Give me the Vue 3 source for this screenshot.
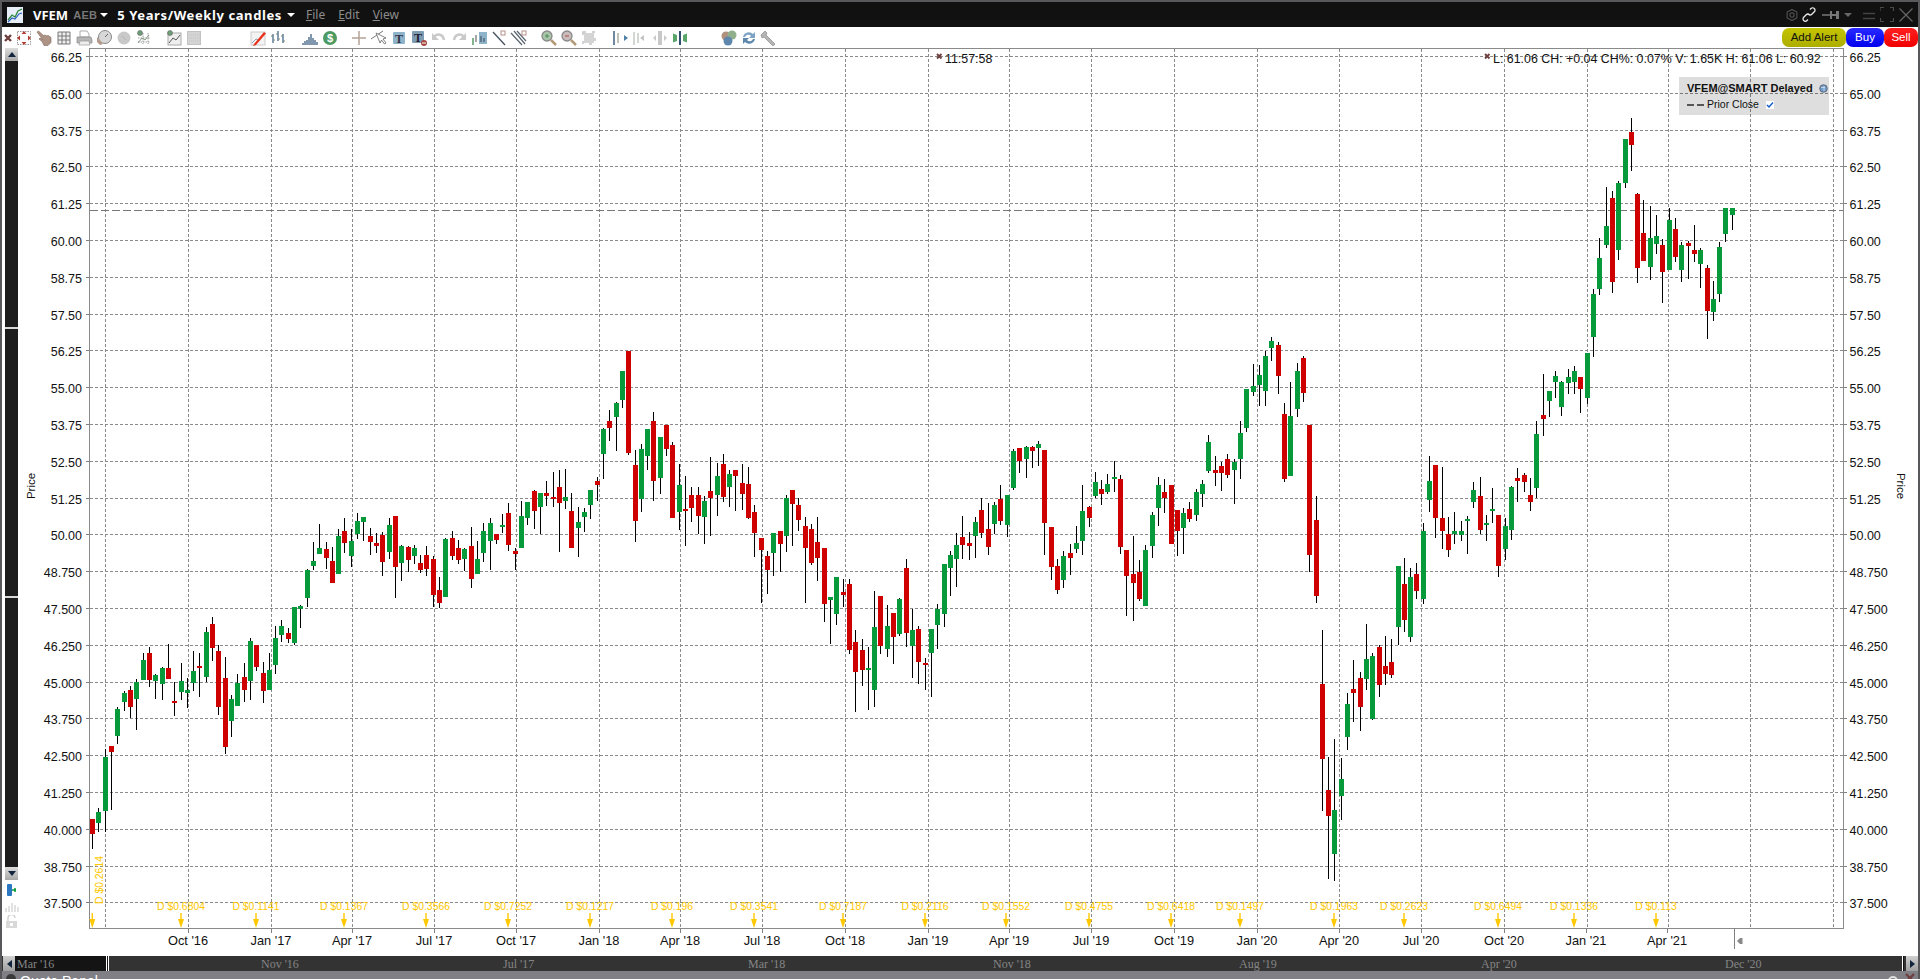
<script setup>
const UP = "g";
const DOWN = "r";

// candles as [x, high, low, bodyTop, bodyBottom, colour], grouped by how they were measured
const candleGroups = [
  { x0: 0, sx: 1, y0: 0, sy: 1, rows: [
    [92, 819, 849, 819, 834, DOWN], [98.5, 808, 832, 812, 823, UP], [105.3, 749, 832, 757, 811, UP], [111.3, 746, 810, 746, 752, DOWN],
  ] },
  { x0: 80, sx: 3, y0: 540, sy: 3, rows: [
    [113,502,612,507,588,UP],[133,453,513,459,486,UP],[151,438,534,450,501,DOWN],[170,417,570,426,477,UP],[190,339,420,360,420,UP],
    [208,321,441,339,420,DOWN],[226,402,477,405,423,UP],[247,381,480,384,432,UP],[265,312,417,384,417,DOWN],[283,426,528,483,489,DOWN],
    [304,369,480,423,456,UP],[322,414,504,450,459,UP],[340,333,453,393,429,UP],[358,339,471,378,384,DOWN],[379,261,426,276,411,UP],
    [397,231,363,252,324,DOWN],[415,315,525,333,501,DOWN],[436,351,642,414,621,DOWN],[454,465,591,477,543,UP],[472,402,498,429,498,UP],
    [493,369,486,411,450,DOWN],[511,294,480,303,423,UP],[529,315,393,315,381,DOWN],[550,366,489,399,453,DOWN],[568,339,450,390,450,UP],
    [586,258,402,294,375,UP],[604,240,306,258,285,UP],[625,264,309,279,297,DOWN],[643,201,315,201,309,UP],
  ] },
  { x0: 300, sx: 2.24, y0: 430, sy: 3, rows: [
    [1,525,594,527,538,UP],[16,417,531,420,504,UP],[30,336,420,393,408,UP],[44,282,372,354,372,UP],[59,336,417,357,384,DOWN],
    [72,351,459,393,459,DOWN],[87,297,432,318,432,UP],[100,264,369,303,339,DOWN],[115,297,411,333,378,UP],[129,249,327,273,312,UP],
    [143,261,333,261,276,UP],[158,294,375,318,336,DOWN],[172,309,369,339,348,DOWN],[185,306,438,315,396,DOWN],[200,264,387,285,366,UP],
    [214,258,504,258,411,DOWN],[228,345,453,348,399,UP],[243,348,426,351,390,DOWN],[257,345,402,354,378,UP],[270,375,429,399,420,DOWN],
    [284,348,438,375,417,DOWN],[299,378,531,387,495,DOWN],[312,441,534,480,519,DOWN],[326,324,501,327,501,UP],[341,303,390,324,378,DOWN],
    [355,330,402,354,390,DOWN],[368,354,423,357,387,UP],[384,291,474,348,447,DOWN],[397,333,432,387,432,UP],[411,279,396,303,369,UP],
    [426,264,420,279,333,UP],[440,312,342,312,330,DOWN],[453,252,309,285,291,UP],[467,219,363,249,345,DOWN],[483,354,420,363,372,DOWN],
    [496,213,354,258,354,UP],[510,216,285,216,264,UP],[525,180,297,183,243,DOWN],[538,189,313,189,231,UP],[552,153,228,189,198,DOWN],
    [568,126,231,201,207,DOWN],[581,120,366,171,219,DOWN],[594,117,237,201,213,UP],[608,189,354,243,354,DOWN],[623,231,381,276,294,UP],
    [637,234,306,246,261,UP],[650,180,267,180,225,UP],[666,141,213,153,165,DOWN],
  ] },
  { x0: 560, sx: 3, y0: 340, sy: 3, rows: [
    [130,264,417,267,342,UP],[148,210,303,243,264,DOWN],[169,186,333,189,231,UP],[187,93,204,93,180,UP],[205,33,345,33,339,DOWN],
    [226,330,606,375,543,DOWN],[244,312,516,327,477,UP],[262,267,390,267,348,UP],[280,216,483,243,423,DOWN],[301,291,462,291,414,UP],
    [319,255,348,255,327,DOWN],[337,306,534,315,534,DOWN],[358,372,570,435,516,UP],[376,408,618,507,513,DOWN],[394,441,546,465,504,DOWN],
    [415,441,582,465,528,DOWN],[433,468,612,483,531,UP],[451,351,588,453,474,DOWN],[472,369,528,408,465,UP],[490,342,486,372,471,DOWN],
    [508,390,501,402,441,UP],[526,390,513,390,408,DOWN],[547,372,510,429,462,DOWN],[565,381,537,432,534,DOWN],[583,495,651,516,579,DOWN],
    [604,594,789,594,630,DOWN],[622,633,762,648,690,DOWN],[640,579,708,579,639,UP],[661,573,696,573,612,DOWN],[679,465,636,474,588,UP],
    [697,450,618,450,492,DOWN],[715,474,573,495,540,DOWN],[736,531,789,558,624,DOWN],[754,552,675,567,669,DOWN],[772,531,723,606,654,DOWN],
    [793,624,846,624,792,DOWN],[811,771,912,771,780,UP],[829,711,855,711,822,UP],[850,717,801,756,765,DOWN],[868,717,942,732,930,DOWN],
  ] },
  { x0: 300, sx: 2.24, y0: 430, sy: 3, rows: [
    [1244,600,846,636,726,DOWN],[1259,627,768,660,720,DOWN],[1273,651,840,714,720,UP],[1286,483,831,591,780,UP],[1300,498,672,498,648,DOWN],
    [1315,525,681,588,657,UP],[1330,549,702,549,621,DOWN],[1342,504,618,507,612,UP],[1358,387,651,414,609,DOWN],[1372,537,744,600,649,UP],
    [1386,588,762,597,696,DOWN],[1401,684,780,699,705,DOWN],[1415,597,801,597,669,UP],[1428,522,657,537,585,UP],[1443,402,591,402,552,UP],
    [1457,363,498,375,414,UP],[1471,309,471,345,387,UP],[1484,258,387,321,345,DOWN],[1499,306,390,339,348,DOWN],[1513,261,384,276,318,UP],
    [1527,204,324,240,309,DOWN],
  ] },
  { x0: 560, sx: 3, y0: 340, sy: 3, rows: [
    [1285,489,645,567,621,DOWN],[1303,486,582,495,552,UP],[1321,435,555,477,543,DOWN],[1342,465,591,465,555,UP],[1360,327,450,333,444,UP],
    [1378,324,399,324,363,DOWN],[1399,318,414,321,357,UP],[1417,318,384,321,333,DOWN],[1435,303,378,312,324,UP],
  ] },
  { x0: 1040, sx: 3, y0: 340, sy: 3, rows: [
    [13,330,645,330,549,DOWN],[34,561,720,561,681,DOWN],[52,657,762,678,750,DOWN],[70,633,744,648,720,UP],[91,612,705,639,654,DOWN],
    [109,558,639,609,627,UP],[127,435,645,513,603,UP],[148,498,561,501,534,DOWN],[166,396,474,426,468,UP],[184,420,495,447,462,DOWN],
    [202,402,462,432,456,UP],[223,363,456,411,417,UP],[241,405,642,417,621,DOWN],[259,630,828,630,708,DOWN],[280,588,843,702,729,DOWN],
    [298,660,783,696,777,DOWN],[316,615,798,630,798,UP],[337,516,654,525,618,UP],[355,411,558,435,504,UP],[373,417,519,456,474,DOWN],
    [394,435,612,435,612,DOWN],[412,510,648,510,573,DOWN],[430,504,642,519,564,UP],[448,486,546,507,537,DOWN],[469,447,543,456,525,UP],
    [487,420,501,432,462,UP],[505,285,399,306,393,UP],[526,348,438,390,399,DOWN],[544,366,453,378,399,DOWN],[562,342,414,357,405,DOWN],
    [583,357,492,366,390,UP],[601,243,417,279,357,UP],[619,147,276,147,264,UP],[640,72,168,138,156,UP],[658,75,198,105,135,UP],
    [676,33,198,48,153,UP],[694,-9,63,3,24,UP],[715,6,162,15,108,DOWN],[733,189,426,222,417,DOWN],[751,126,408,228,408,UP],
    [772,69,231,93,207,UP],[790,48,186,54,159,DOWN],[808,255,696,255,645,DOWN],[829,468,789,540,768,DOWN],
  ] },
  { x0: 1000, sx: 2.529, y0: 380, sy: 2.851, rows: [
    [815,713,1229,867,1080,DOWN],[830,1075,1422,1169,1243,DOWN],[846,1023,1428,1226,1351,UP],[863,1078,1254,1138,1186,UP],[879,892,1055,924,1018,UP],
    [894,798,975,882,892,DOWN],[911,832,1001,850,932,DOWN],[927,696,884,795,852,UP],[942,778,970,787,967,UP],[959,756,905,761,870,DOWN],
    [975,730,870,815,838,DOWN],[990,738,850,804,841,DOWN],[1007,530,755,530,704,UP],[1023,507,718,582,684,DOWN],[1038,537,747,562,733,UP],
    [1053,522,624,553,602,DOWN],[1071,408,639,430,624,UP],[1086,217,376,288,342,UP],[1101,242,450,242,393,DOWN],[1119,248,482,393,430,DOWN],
    [1134,391,505,439,485,DOWN],[1149,376,468,430,439,UP],[1167,402,459,430,442,UP],[1182,388,496,396,402,UP],[1197,291,365,314,348,UP],
    [1215,277,439,331,428,DOWN],[1230,385,459,408,413,UP],[1245,308,408,368,373,UP],[1260,385,561,385,530,DOWN],[1278,393,513,416,482,UP],
    [1293,302,456,305,428,UP],[1309,251,348,279,288,DOWN],[1326,265,319,271,291,DOWN],[1341,279,373,328,348,DOWN],[1357,117,336,154,308,UP],
  ] },
  { x0: 0, sx: 1, y0: 0, sy: 1, rows: [
    [1543.3,374,436,415,419,DOWN],[1549.3,391,417,391,401,UP],[1555.3,371,398,376,382,UP],[1561,381,416,382,407,UP],
    [1568.3,369,394,377,383,UP],[1574.3,366,394,371,382,UP],[1580.5,377,413,377,389,DOWN],[1587,353,404,353,398,UP],
  ] },
  { x0: 1500, sx: 3, y0: 100, sy: 3, rows: [
    [280,567,771,582,711,UP],[298,414,585,474,567,UP],[319,261,444,378,435,UP],[337,273,579,294,546,DOWN],[355,243,480,249,450,UP],
    [376,117,264,117,249,UP],[394,54,213,96,135,DOWN],[412,279,549,282,504,DOWN],[430,300,483,399,483,DOWN],[451,318,540,414,501,UP],
    [469,345,462,408,432,UP],[487,417,609,435,516,DOWN],[508,324,510,360,510,UP],[526,354,486,387,471,DOWN],[544,426,546,435,510,UP],
    [565,423,537,429,438,DOWN],[583,375,486,450,462,DOWN],[601,444,564,450,492,UP],[622,495,717,504,633,DOWN],[640,543,663,597,636,UP],
    [658,426,606,441,582,UP],[676,324,426,324,402,UP],[697,324,390,324,345,UP],
  ] },
];

const candles = candleGroups.flatMap((g) =>
  g.rows.map(([px, hi, lo, top, bot, c]) => {
    const bodyTop = Math.round(g.y0 + top / g.sy);
    const bodyBot = Math.round(g.y0 + bot / g.sy);
    return {
      x: Math.floor(g.x0 + px / g.sx),
      hi: Math.round(g.y0 + hi / g.sy),
      lo: Math.round(g.y0 + lo / g.sy),
      top: bodyTop,
      h: Math.max(bodyBot - bodyTop, 2),
      c,
    };
  })
);

const priceLabels = ["66.25", "65.00", "63.75", "62.50", "61.25", "60.00", "58.75", "57.50", "56.25", "55.00", "53.75", "52.50", "51.25", "50.00", "48.750", "47.500", "46.250", "45.000", "43.750", "42.500", "41.250", "40.000", "38.750", "37.500"];
const priceRows = priceLabels.map((label, i) => ({ label, y: Math.floor(56.5 + 36.8 * i) + 0.5 }));

const gridX = [105, 188, 271, 352, 434, 516, 599, 680, 762, 845, 928, 1009, 1091, 1174, 1257, 1339, 1421, 1504, 1587, 1668, 1750, 1833];
const timeLabels = [
  ["Oct '16", 188], ["Jan '17", 271], ["Apr '17", 352], ["Jul '17", 434], ["Oct '17", 516], ["Jan '18", 599], ["Apr '18", 680],
  ["Jul '18", 762], ["Oct '18", 845], ["Jan '19", 928], ["Apr '19", 1009], ["Jul '19", 1091], ["Oct '19", 1174], ["Jan '20", 1257],
  ["Apr '20", 1339], ["Jul '20", 1421], ["Oct '20", 1504], ["Jan '21", 1586], ["Apr '21", 1667],
];

const dividends = [
  ["D $0.6804", 181], ["D $0.1141", 256], ["D $0.1367", 344], ["D $0.3566", 426], ["D $0.7252", 508], ["D $0.1217", 590], ["D $0.196", 672],
  ["D $0.3541", 754], ["D $0.7187", 843], ["D $0.2116", 925], ["D $0.1552", 1006], ["D $0.4755", 1089], ["D $0.6418", 1171], ["D $0.1497", 1240],
  ["D $0.1963", 1334], ["D $0.2623", 1404], ["D $0.6494", 1498], ["D $0.1336", 1574], ["D $0.113", 1656],
];

const navLabels = [
  ["Nov '16", 261], ["Jul '17", 503], ["Mar '18", 748], ["Nov '18", 993], ["Aug '19", 1239], ["Apr '20", 1481], ["Dec '20", 1725],
];

const bars = (xs, color) => xs.map(([x, y]) => `<path d="M${x} ${y}V17" stroke="${color}" stroke-width="1.4"/>`).join("");

// toolbar icons, gap is the space before the icon
const tools = [
  { gap: -4, svg: '<path d="M7 7l6 6M13 7l-6 6" stroke="#6e3f3f" stroke-width="2.4"/>' },
  { gap: -4, svg: '<rect x="3.5" y="3.5" width="13" height="13" fill="#fff" stroke="#999" stroke-dasharray="1.5 1"/><path d="M10 3l-2.4 3h4.8zM10 17l-2.4-3h4.8zM3 10l3-2.4v4.8zM17 10l-3-2.4v4.8z" fill="#b23a2e"/>' },
  { gap: 0, svg: '<path d="M3 4l1.5-1 5 4.500 1.500-.5 1.500.7 2-.2 2.500 2v5l-3 3h-4l-2-4-3-2.500 1-1 2.500 1.500z" fill="#ad9385" stroke="#85695c" stroke-width=".6"/>' },
  { gap: 0, svg: '<path d="M4 4h12v12H4zM4 8h12M4 12h12M8 4v12M12 4v12" fill="#eee" stroke="#777"/>' },
  { gap: 0, svg: '<path d="M6 3h7l2 3v3H6z" fill="#fff" stroke="#aaa"/><path d="M3 9h14l1 3v3H3z" fill="#b5b5b5" stroke="#888" stroke-width=".7"/><path d="M6 13h9l1 4H5z" fill="#eee" stroke="#999" stroke-width=".7"/>' },
  { gap: 0, svg: '<circle cx="11" cy="9" r="6.500" fill="#d8d8d8" stroke="#888"/><path d="M11 9l3-3" stroke="#666"/><path d="M3 9l6 7-3 1-3-3z" fill="#b59a8c"/>' },
  { gap: 0, svg: '<circle cx="10" cy="10" r="6.500" fill="#c9c9c9"/><path d="M8 8l4 4" stroke="#b5b5b5"/>' },
  { gap: 0, svg: '<path d="M4 14h12M4 10h12M9 5v11M14 5v11" stroke="#9a9a9a" stroke-dasharray="1.5 1"/><path d="M4 15l4-5 3 2 4-5" fill="none" stroke="#8a9a8a"/><circle cx="6" cy="5" r="2.500" fill="#6d9e76" stroke="#555" stroke-width=".5"/>' },
  { gap: 10, svg: '<rect x="4" y="5" width="13" height="12" fill="#eee" stroke="#aaa"/><path d="M5 15l4-5 3 2 4-5" fill="none" stroke="#555"/><circle cx="6" cy="5" r="2.500" fill="#6d9e76" stroke="#555" stroke-width=".5"/>' },
  { gap: 0, svg: '<rect x="3.500" y="3.500" width="13" height="13" fill="#d4d4d4" stroke="#c2c2c2"/><path d="M3 7h14M3 10h14M3 13h14" stroke="#c4c4c4" stroke-dasharray="1 1"/>' },
  { gap: 44, svg: '<rect x="3" y="4" width="14" height="13" fill="#f3f3f3" stroke="#ccc"/><path d="M4 15l4-4 3 1 4-4" fill="none" stroke="#8ba2b6"/><path d="M6 16L16 4l2 1.500L8 17l-3 1z" fill="#e8321e"/>' },
  { gap: 0, svg: '<path d="M5 6v9M10 3v10M15 6v9" stroke="#5f7f9c" stroke-width="1.500"/><path d="M3 8h2M5 12h2M8 6h2M10 11h2M13 8h2M15 13h2" stroke="#7d8a70"/>' },
  { gap: 12, svg: bars([[3,15],[5,13],[7,12],[9,9],[11,6],[13,10],[15,12],[17,14]], "#4a6b8c") },
  { gap: 0, svg: '<circle cx="10" cy="10" r="7" fill="#4d9a62"/><text x="10" y="14" text-anchor="middle" font-family="Liberation Sans" font-weight="700" font-size="11" fill="#fff">$</text>' },
  { gap: 9, svg: '<path d="M10 3v14M3 10h14" stroke="#b5a396" stroke-width="1.500"/>' },
  { gap: 0, svg: '<path d="M2 11L14 3" stroke="#777"/><path d="M7 5l4 10 1.500-3 3 4 1.500-1-3-4 3-1z" fill="#fff" stroke="#666" stroke-width=".8"/>' },
  { gap: 0, svg: '<rect x="4" y="4" width="12" height="12" rx="1" fill="#8fb3c9"/><text x="10" y="14.500" text-anchor="middle" font-family="Liberation Serif" font-weight="700" font-size="12" fill="#334">T</text>' },
  { gap: 0, svg: '<rect x="3" y="3" width="12" height="12" rx="1" fill="#7e9db3"/><text x="9" y="13.500" text-anchor="middle" font-family="Liberation Serif" font-weight="700" font-size="12" fill="#223">T</text><circle cx="15" cy="15" r="3" fill="#a5473f"/><path d="M13 15h4" stroke="#fff"/>' },
  { gap: 0, svg: '<path d="M5 9c3-4 9-3 10 3" fill="none" stroke="#c9c9c9" stroke-width="2.500"/><path d="M3 5v7h7z" fill="#c9c9c9"/>' },
  { gap: 0, svg: '<path d="M15 9c-3-4-9-3-10 3" fill="none" stroke="#c9c9c9" stroke-width="2.500"/><path d="M17 5v7h-7z" fill="#c9c9c9"/>' },
  { gap: 0, svg: '<path d="M4 10v7" stroke="#5a9a6a" stroke-width="1.500"/><path d="M7 7v7" stroke="#888" stroke-width="1.500"/><rect x="10" y="4" width="8" height="12" fill="#8fb3c9"/><path d="M12 8v6M15 10v4" stroke="#345"/>' },
  { gap: 0, svg: '<path d="M4 4l12 13" stroke="#44515e" stroke-width="1.300"/><rect x="12" y="3" width="4" height="4" fill="#fff" stroke="#b5908a"/>' },
  { gap: 0, svg: '<path d="M2 5l11 12M5 3l11 13M8 3l9 10" stroke="#5a6570" stroke-width="1.200"/><rect x="13" y="3" width="4" height="4" fill="#fff" stroke="#b5908a"/>' },
  { gap: 10, svg: '<circle cx="8" cy="8" r="5" fill="#a9c4a9" stroke="#8a8a8a" stroke-width="1.300"/><path d="M6 8h4M8 6v4" stroke="#4c8f5a"/><path d="M12 12l5 5" stroke="#b59a7a" stroke-width="2.500"/>' },
  { gap: 0, svg: '<circle cx="8" cy="8" r="5" fill="#c9bcbc" stroke="#8a8a8a" stroke-width="1.300"/><path d="M6 8h4" stroke="#a84c40"/><path d="M12 12l5 5" stroke="#b59a7a" stroke-width="2.500"/>' },
  { gap: 0, svg: '<rect x="5" y="5" width="10" height="10" fill="#d4d4d4"/><path d="M4 4h12v12H4z" fill="none" stroke="#c4c4c4" stroke-width="1.500" stroke-dasharray="3 6"/>' },
  { gap: 11, svg: '<path d="M4 3v14" stroke="#3f5f7f" stroke-width="1.500"/><path d="M8 5v10" stroke="#7d8a70"/><path d="M11 10h3V7l4 3-4 3v-3z" fill="#4f7fa5"/>' },
  { gap: 0, svg: '<path d="M4 4v13M8 5v10" stroke="#b9c4b9" stroke-width="1.300"/><path d="M18 10h-4V7l-4 3 4 3v-3z" fill="#c4c4c4"/>' },
  { gap: 0, svg: '<rect x="8" y="3" width="4" height="14" fill="#c9c9c9"/><path d="M6 7l-3 3 3 3zM14 7l3 3-3 3z" fill="#c9c9c9"/>' },
  { gap: 0, svg: '<rect x="9" y="3" width="2" height="14" fill="#2f4f6f"/><path d="M7 7l-4-1.500v9L7 13zM13 7l4-1.500v9L13 13z" fill="#5aa56a"/>' },
  { gap: 29, svg: '<circle cx="7" cy="8" r="4.500" fill="#b08f7f"/><circle cx="13" cy="7" r="4.500" fill="#8fb08a"/><circle cx="9" cy="13" r="4.500" fill="#5f87ad"/>' },
  { gap: 0, svg: '<path d="M4 9a6 6 0 0 1 10-3l2-2v6h-6l2-2a3.500 3.500 0 0 0-6 1z" fill="#7fa3c4"/><path d="M16 11a6 6 0 0 1-10 3l-2 2v-6h6l-2 2a3.500 3.500 0 0 0 6-1z" fill="#5d87ad"/>' },
  { gap: 0, svg: '<path d="M4 5l2-2 2 2-1 2 9 9-2 2-9-9-2 1-1-3z" fill="#b5b5b5" stroke="#8a8a8a" stroke-width=".7"/>' },
];
</script>

<template>
  <div class="app">
    <header class="titlebar">
      <svg class="logo" viewBox="0 0 16 16">
        <rect width="16" height="16" fill="#e8eef8" />
        <path d="M1 13l4-5 3 2 3-6 4-2" fill="none" stroke="#2d8a3e" stroke-width="1.300" />
        <path d="M1 15l4-4 3 1 4-5 3-1" fill="none" stroke="#2a5fc0" stroke-width="1.100" />
      </svg>
      <span class="symbol">VFEM</span>
      <span class="exchange">AEB</span>
      <span class="caret"></span>
      <span class="period">5 Years/Weekly candles</span>
      <span class="caret"></span>
      <nav class="menu">
        <span><u>F</u>ile</span>
        <span><u>E</u>dit</span>
        <span><u>V</u>iew</span>
      </nav>
      <div class="window-tools">
        <svg class="gear" width="12" height="12" viewBox="0 0 14 14">
          <path d="M7 .5l5.700 3.200v6.600L7 13.500l-5.700-3.200V3.700z" fill="none" stroke="#555" stroke-width="1.200" />
          <circle cx="7" cy="7" r="2.500" fill="none" stroke="#555" stroke-width="1.200" />
        </svg>
        <svg class="link" width="14" height="15" viewBox="0 0 14 15">
          <path d="M8 2.500l1-1a2.300 2.300 0 0 1 3.300 3.300l-2.500 2.500a2.300 2.300 0 0 1-3.300 0M6 12.500l-1 1a2.300 2.300 0 0 1-3.300-3.300l2.500-2.500a2.300 2.300 0 0 1 3.300 0" fill="none" stroke="#e8e8e8" stroke-width="1.300" />
        </svg>
        <svg class="pin" width="17" height="8" viewBox="0 0 17 8">
          <path d="M0 4h8" stroke="#777" stroke-width="1.500" />
          <path d="M8 0h2v3h4V0h3v8h-3V5h-4v3H8z" fill="#777" />
        </svg>
        <span class="caret dim"></span>
        <svg class="win-eq" width="12" height="8" viewBox="0 0 12 8">
          <path d="M0 1.500h12M0 6.500h12" stroke="#444" stroke-width="1.300" />
        </svg>
        <svg class="win-max" width="14" height="15" viewBox="0 0 14 15">
          <path d="M0 4V.5h4M10 .5h3.500V4M13.500 11v3.500H10M4 14.500H.5V11" fill="none" stroke="#4a4a4a" stroke-width="1.200" />
        </svg>
        <svg class="win-close" width="14" height="14" viewBox="0 0 14 14">
          <path d="M.5.5l13 13M13.500.5l-13 13" stroke="#666" stroke-width="1.200" />
        </svg>
      </div>
    </header>

    <div class="toolbar">
      <svg
        v-for="(tool, i) in tools"
        :key="i"
        class="tool"
        viewBox="0 0 20 20"
        :style="{ marginLeft: tool.gap + 'px' }"
        v-html="tool.svg"
      ></svg>
      <div class="actions">
        <button class="action alert" type="button">Add Alert</button>
        <button class="action buy" type="button">Buy</button>
        <button class="action sell" type="button">Sell</button>
      </div>
    </div>

    <div class="chart-area">
      <aside class="rail">
        <div class="scrollbar">
          <span class="scroll-btn"><i class="tri-up"></i></span>
          <span class="scroll-track"><i class="mark first"></i><i class="mark second"></i></span>
          <span class="scroll-btn"><i class="tri-down"></i></span>
        </div>
        <svg class="rail-icon" width="13" height="14" viewBox="0 0 13 14">
          <rect x="2" y="1" width="5" height="12" rx="1" fill="#2b78c2" />
          <path d="M7 7h4M10 5v4" stroke="#0a9b3a" stroke-width="1.500" />
        </svg>
        <svg class="rail-icon bars" width="14" height="9" viewBox="0 0 14 9">
          <path d="M1 9V5M4 9V3M7 9V0M10 9V2M13 9V4" stroke="#c4c4c4" />
        </svg>
        <svg class="rail-icon lock" width="13" height="13" viewBox="0 0 13 13">
          <path d="M3 6V3a3 3 0 0 1 7 0" fill="none" stroke="#ccc" stroke-width="1.300" />
          <rect x="1" y="6" width="11" height="7" fill="#d8d8d8" />
          <rect x="5" y="8" width="3" height="3" fill="#fff" />
        </svg>
      </aside>

      <svg class="chart" width="1896" height="908" viewBox="22 48 1896 908">
        <g class="grid" shape-rendering="crispEdges">
          <line v-for="row in priceRows" :key="row.label" x1="90" x2="1843" :y1="row.y" :y2="row.y" />
          <line v-for="x in gridX" :key="x" :x1="x + 0.5" :x2="x + 0.5" y1="49" y2="928" />
        </g>
        <g class="ticks" shape-rendering="crispEdges">
          <template v-for="row in priceRows" :key="row.label">
            <line x1="86" x2="90" :y1="row.y" :y2="row.y" />
            <line x1="1843" x2="1847" :y1="row.y" :y2="row.y" />
          </template>
          <line v-for="t in timeLabels" :key="t[0]" :x1="t[1] + 0.5" :x2="t[1] + 0.5" y1="928" y2="933" />
        </g>
        <rect class="frame" x="89.500" y="48.500" width="1754" height="880" shape-rendering="crispEdges" />

        <line class="prior-close" x1="90" x2="1843" y1="210.500" y2="210.500" shape-rendering="crispEdges" />

        <g shape-rendering="crispEdges">
          <g v-for="(c, i) in candles" :key="i">
            <rect :x="c.x" :y="c.hi" width="1" :height="c.lo - c.hi" fill="#000" />
            <rect :x="c.x - 2" :y="c.top" width="5" :height="c.h" :fill="c.c === 'g' ? '#069a3a' : '#cf0000'" />
          </g>
        </g>

        <g class="labels">
          <template v-for="row in priceRows" :key="row.label">
            <text x="82" :y="row.y + 5" text-anchor="end">{{ row.label }}</text>
            <text x="1849.500" :y="row.y + 5">{{ row.label }}</text>
          </template>
          <text v-for="t in timeLabels" :key="t[0]" class="time" :x="t[1]" y="945" text-anchor="middle">{{ t[0] }}</text>
          <text class="axis-title" transform="translate(35 486) rotate(-90)" text-anchor="middle">Price</text>
          <text class="axis-title" transform="translate(1897 486) rotate(90)" text-anchor="middle">Price</text>
        </g>

        <g class="dividends">
          <g v-for="d in dividends" :key="d[0]">
            <text :x="d[1]" y="909.500" text-anchor="middle">{{ d[0] }}</text>
            <path :d="`M${d[1] - 0.7} 913h1.400v6h2.300l-3 9-3-9h2.300z`" />
          </g>
          <text transform="translate(102.500 904) rotate(-90)">D $0.2614</text>
          <path d="M91.600 913h1.400v6h2.300l-3 9-3-9h2.300z" />
        </g>

        <g>
          <path class="cross" d="M937 54l4.500 4.500M941.500 54L937 58.500" />
          <text class="status" x="945" y="63">11:57:58</text>
          <path class="cross" d="M1485 54l4.500 4.500M1489.500 54L1485 58.500" />
          <text class="status" x="1493" y="63">L: 61.06 CH: +0.04 CH%: 0.07% V: 1.65K H: 61.06 L: 60.92</text>
        </g>

        <line x1="1734.500" x2="1734.500" y1="928" y2="949" stroke="#808080" shape-rendering="crispEdges" />
        <path d="M1737 941l3-3h2.500v6H1740z" fill="#888" />
      </svg>

      <div class="legend">
        <div class="legend-head">
          <span>VFEM@SMART Delayed</span>
          <svg width="9" height="9" viewBox="0 0 9 9"><circle cx="4.500" cy="4.500" r="3.800" fill="#6d9cc9" stroke="#556" stroke-width=".8" /><path d="M2 3.500h4M5 2v5" stroke="#dde" stroke-width=".8" /></svg>
        </div>
        <div class="legend-row">
          <svg class="dashes" width="17" height="2" viewBox="0 0 17 2"><path d="M0 1h7M10 1h7" stroke="#555" stroke-width="2" /></svg>
          <span>Prior Close</span>
          <svg class="check" width="8" height="8" viewBox="0 0 8 8"><rect width="8" height="8" fill="#fff" /><path d="M1 4l2 2 4-4.500" fill="none" stroke="#1560c8" stroke-width="1.500" /></svg>
        </div>
      </div>
    </div>

    <div class="navigator">
      <span class="nav-btn"><i class="tri-left"></i></span>
      <span class="nav-label first">Mar '16</span>
      <span class="nav-thumb"></span>
      <span
        v-for="n in navLabels"
        :key="n[0]"
        class="nav-label tick"
        :style="{ left: n[1] - 2 + 'px' }"
      >{{ n[0] }}</span>
      <span class="nav-thumb end"></span>
      <span class="nav-btn right"><i class="tri-right"></i></span>
    </div>

    <div class="quote-panel">
      <span class="panel-dot"></span>
      <span class="panel-name">Quote Panel</span>
      <span class="panel-icons">
        <svg width="12" height="8" viewBox="0 0 12 8"><path d="M2 8a4 4 0 0 1 8 0" fill="none" stroke="#ddd" stroke-width="2" /></svg>
        <svg width="10" height="8" viewBox="0 0 10 8"><path d="M1 1l8 8M9 1L1 9" stroke="#6e3f3f" stroke-width="2.400" /></svg>
      </span>
    </div>
  </div>
</template>

<style scoped>
.app {
  width: 1920px;
  height: 979px;
  box-sizing: border-box;
  padding: 2px 2px 0;
  background: #58585a;
  display: flex;
  flex-direction: column;
  overflow: hidden;
  font-family: "Liberation Sans", Arial, sans-serif;
}
.titlebar {
  height: 25px;
  flex: none;
  background: #111;
  display: flex;
  align-items: center;
  color: #fff;
  padding-left: 5px;
}
.logo {
  width: 16px;
  height: 16px;
  margin-right: 10px;
}
.symbol,
.period {
  font-family: "Noto Sans", sans-serif;
  font-weight: 700;
  font-size: 13px;
}
.period {
  letter-spacing: 0.6px;
}
.exchange {
  font-size: 11px;
  font-weight: 700;
  color: #777;
  margin-left: 5px;
  letter-spacing: 0.3px;
}
.caret {
  width: 0;
  height: 0;
  border-left: 4px solid transparent;
  border-right: 4px solid transparent;
  border-top: 4px solid #fff;
  margin-left: 3px;
  margin-right: 9px;
}
.period + .caret {
  margin-left: 5px;
  margin-right: 0;
}
.menu {
  display: flex;
  gap: 13px;
  margin-left: 11px;
  font-family: "Noto Sans", sans-serif;
  font-size: 12px;
  color: #8c8c8c;
}
.window-tools {
  margin-left: auto;
  display: flex;
  align-items: center;
  padding-right: 5px;
}
.caret.dim {
  border-top-color: #666;
  margin: 0 0 0 5px;
}
.link {
  margin-left: 4px;
}
.pin {
  margin-left: 6px;
}
.win-eq {
  margin-left: 11px;
  margin-top: 3px;
}
.win-max {
  margin-left: 5px;
}
.win-close {
  margin-left: 5px;
}
.toolbar {
  height: 21px;
  flex: none;
  background: #fff;
  display: flex;
  align-items: center;
}
.tool {
  width: 20px;
  height: 20px;
  flex: none;
}
.actions {
  margin-left: auto;
  display: flex;
  height: 19px;
  margin-top: -1px;
}
.action {
  border: 0;
  padding: 0;
  font-family: "Liberation Sans", Arial, sans-serif;
  font-size: 11.500px;
  border-radius: 7px;
  line-height: 19px;
}
.alert {
  width: 64px;
  color: #111;
  background: linear-gradient(#c4c400, #adad00);
}
.buy {
  width: 38px;
  color: #fff;
  background: linear-gradient(#2a2aff, #0000ee);
}
.sell {
  width: 34px;
  color: #fff;
  background: linear-gradient(#ff2020, #f00000);
}
.chart-area {
  position: relative;
  height: 908px;
  flex: none;
  background: #fff;
  display: flex;
}
.rail {
  width: 20px;
  flex: none;
  display: flex;
  flex-direction: column;
  align-items: flex-start;
  padding-left: 3px;
  box-sizing: border-box;
}
.scrollbar {
  width: 13px;
  height: 832px;
  display: flex;
  flex-direction: column;
}
.scroll-btn {
  height: 13px;
  flex: none;
  background: linear-gradient(#ddd, #a8a8a8);
  display: flex;
  align-items: center;
  justify-content: center;
}
.scroll-track {
  flex: 1;
  background: #1c1c1c;
  position: relative;
}
.mark {
  position: absolute;
  left: 0;
  right: 0;
  height: 2px;
  background: #d8d8d8;
}
.mark.first {
  top: 266px;
}
.mark.second {
  top: 535px;
}
.tri-up,
.tri-down {
  width: 0;
  height: 0;
  border-left: 4px solid transparent;
  border-right: 4px solid transparent;
}
.tri-up {
  border-bottom: 5px solid #10243c;
}
.tri-down {
  border-top: 5px solid #10243c;
}
.rail-icon {
  margin-top: 3px;
}
.rail-icon.bars {
  margin-top: 6px;
}
.rail-icon.lock {
  margin-top: 3px;
}
.chart {
  display: block;
  flex: none;
}
.grid line {
  stroke: #8a8a8a;
  stroke-dasharray: 3 2;
}
.ticks line {
  stroke: #808080;
}
.frame {
  fill: none;
  stroke: #8a8a8a;
}
.prior-close {
  stroke: #777;
  stroke-dasharray: 8 3;
}
.labels text {
  font-family: "Liberation Sans", Arial, sans-serif;
  font-size: 12.500px;
  fill: #111;
}
.labels .time {
  font-size: 12.800px;
}
.labels .axis-title {
  font-size: 11.500px;
}
.dividends text {
  font-family: "Liberation Sans", Arial, sans-serif;
  font-size: 10.400px;
  fill: #ffc800;
}
.dividends path {
  fill: #ffc800;
}
.cross {
  stroke: #6e3f3f;
  stroke-width: 1.800;
  fill: none;
}
.status {
  font-family: "Liberation Sans", Arial, sans-serif;
  font-size: 12.400px;
  fill: #111;
}
.legend {
  position: absolute;
  left: 1677px;
  top: 29px;
  width: 150px;
  height: 38px;
  box-sizing: border-box;
  padding: 4px 0 0 8px;
  background: rgba(0, 0, 0, 0.13);
  color: #111;
}
.legend-head {
  display: flex;
  align-items: center;
  gap: 6px;
  font-size: 11px;
  font-weight: 700;
  line-height: 15px;
}
.legend-row {
  display: flex;
  align-items: center;
  font-size: 10.500px;
  line-height: 15px;
  margin-top: 1px;
}
.dashes {
  margin-right: 3px;
}
.check {
  margin-left: 7px;
}
.navigator {
  position: relative;
  height: 15px;
  flex: none;
  background: #333;
  display: flex;
  align-items: stretch;
}
.nav-btn {
  position: relative;
  width: 12px;
  margin-left: 1px;
  flex: none;
  background: linear-gradient(#d0d0d0, #a0a0a0);
  display: flex;
  align-items: center;
  justify-content: center;
}
.nav-btn.right {
  margin-left: 2px;
}
.tri-left {
  border-top: 4px solid transparent;
  border-bottom: 4px solid transparent;
  border-right: 5px solid #10243c;
}
.tri-right {
  border-top: 4px solid transparent;
  border-bottom: 4px solid transparent;
  border-left: 5px solid #10243c;
}
.nav-label {
  font-family: "Liberation Serif", serif;
  font-size: 12px;
  line-height: 17px;
  color: #858585;
}
.nav-label.first {
  width: 91px;
  padding-left: 2px;
  box-sizing: border-box;
  background: #141414;
}
.nav-label.tick {
  position: absolute;
  top: 0;
}
.nav-thumb {
  width: 3px;
  flex: none;
  border-left: 1px solid #fff;
  border-right: 1px solid #fff;
  box-sizing: border-box;
  background: #141414;
}
.nav-thumb.end {
  margin-left: auto;
  width: 2px;
  border-right: 0;
}
.quote-panel {
  flex: 1;
  background: #7f7f85;
  display: flex;
  overflow: hidden;
  color: #fff;
  font-size: 14px;
  line-height: 16px;
  padding-top: 2px;
}
.panel-dot {
  width: 10px;
  height: 10px;
  border-radius: 50%;
  background: #3a3a3a;
  margin: 1px 4px 0 4px;
}
.panel-icons {
  margin-left: auto;
  display: flex;
  gap: 6px;
  padding-right: 3px;
}
</style>
